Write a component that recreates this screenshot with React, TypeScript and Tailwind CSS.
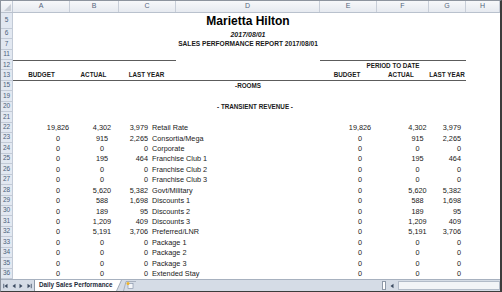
import React from 'react';

const rows: string[][] = [
  ['22', '19,826', '4,302', '3,979', 'Retail Rate', '19,826', '4,302', '3,979'],
  ['23', '0', '915', '2,265', 'Consortia/Mega', '0', '915', '2,265'],
  ['24', '0', '0', '0', 'Corporate', '0', '0', '0'],
  ['25', '0', '195', '464', 'Franchise Club 1', '0', '195', '464'],
  ['26', '0', '0', '0', 'Franchise Club 2', '0', '0', '0'],
  ['27', '0', '0', '0', 'Franchise Club 3', '0', '0', '0'],
  ['28', '0', '5,620', '5,382', 'Govt/Military', '0', '5,620', '5,382'],
  ['29', '0', '588', '1,698', 'Discounts 1', '0', '588', '1,698'],
  ['30', '0', '189', '95', 'Discounts 2', '0', '189', '95'],
  ['31', '0', '1,209', '409', 'Discounts 3', '0', '1,209', '409'],
  ['32', '0', '5,191', '3,706', 'Preferred/LNR', '0', '5,191', '3,706'],
  ['33', '0', '0', '0', 'Package 1', '0', '0', '0'],
  ['34', '0', '0', '0', 'Package 2', '0', '0', '0'],
  ['35', '0', '0', '0', 'Package 3', '0', '0', '0'],
  ['36', '0', '0', '0', 'Extended Stay', '0', '0', '0'],
];

const colHeads = [
  ['A', 'w-[57px]'],
  ['B', 'w-[49px]'],
  ['C', 'w-[57px]'],
  ['D', 'w-[144px]'],
  ['E', 'w-[57px]'],
  ['F', 'w-[52px]'],
  ['G', 'w-[37px]'],
  ['H', 'w-[34px]'],
];

const Row: React.FC<{ n: string; tall?: boolean; children?: React.ReactNode }> = ({ n, tall, children }) => (
  <div className={tall ? 'flex h-[15.8px]' : 'flex h-[10.43px]'}>
    <div className="w-[12px] shrink-0 bg-[#e2e8f1] border-r border-b border-[#c2cad6] flex items-center justify-center text-[6.5px] leading-none text-[#4b5f7b]">
      {n}
    </div>
    <div className="w-[487px] flex items-center whitespace-nowrap leading-none">{children}</div>
  </div>
);

const Arrow: React.FC<{ dir: 'l' | 'r'; bar?: boolean }> = ({ dir, bar }) => (
  <svg width="6" height="6" viewBox="0 0 6 6">
    {dir === 'l' ? <path d="M4.5 0.8 L1.5 3 L4.5 5.2 Z" fill="#3b4a60" /> : <path d="M1.5 0.8 L4.5 3 L1.5 5.2 Z" fill="#3b4a60" />}
    {bar && (dir === 'l' ? <rect x="0.4" y="0.8" width="0.8" height="4.4" fill="#3b4a60" /> : <rect x="4.8" y="0.8" width="0.8" height="4.4" fill="#3b4a60" />)}
  </svg>
);

export default function App() {
  return (
    <div className="w-[502px] h-[292px] overflow-hidden bg-white border-l border-t border-[#8d949e] border-r-2 border-r-[#3c3c3c] border-b border-b-[#3c3c3c] flex flex-col font-['Liberation_Sans_Narrow','Liberation_Sans',Arial,sans-serif] text-[#1a1a1a]">
      {/* column letters */}
      <div className="flex h-[12px] shrink-0 bg-gradient-to-b from-[#f7f8fa] to-[#e6eaf0] border-b border-[#b9c1cd]">
        <div className="w-[12px] border-r border-[#c2cad6] relative">
          <svg className="absolute right-[1px] bottom-[1px]" width="7" height="7" viewBox="0 0 7 7">
            <path d="M7 0 L7 7 L0 7 Z" fill="#c9ced6" />
          </svg>
        </div>
        {colHeads.map(([c, w]) => (
          <div key={c} className={`${w} border-r border-[#c8ced8] flex items-center justify-center text-[7px] text-[#55657c] font-['Liberation_Sans',sans-serif]`}>
            {c}
          </div>
        ))}
      </div>

      <div className="flex-1 overflow-hidden">
        <Row n="5" tall>
          <div className="ml-[163px] w-[144px] text-center font-['Liberation_Sans',Arial,sans-serif] font-bold text-[12px] text-black">Marietta Hilton</div>
        </Row>
        <Row n="6">
          <div className="ml-[163px] w-[144px] text-center font-bold italic text-[7px]">2017/08/01</div>
        </Row>
        <Row n="7">
          <div className="ml-[120px] w-[230px] text-center font-bold text-[6.6px]">SALES PERFORMANCE REPORT 2017/08/01</div>
        </Row>
        <Row n="11" />
        <Row n="12">
          <div className="w-[163px] h-full border-t border-[#5c5c5c]" />
          <div className="w-[144px]" />
          <div className="w-[146px] h-full border-t border-[#5c5c5c] flex items-center justify-center font-bold text-[6.3px]">PERIOD TO DATE</div>
        </Row>
        <Row n="13">
          <div className="w-[453px] h-full flex items-center border-b border-[#5c5c5c] font-bold text-[6.3px]">
            <div className="w-[57px] text-center">BUDGET</div>
            <div className="w-[47px] text-center">ACTUAL</div>
            <div className="w-[59px] text-center">LAST YEAR</div>
            <div className="w-[144px]" />
            <div className="w-[54px] text-center">BUDGET</div>
            <div className="w-[54px] text-center">ACTUAL</div>
            <div className="w-[38px] text-center">LAST YEAR</div>
          </div>
        </Row>
        <Row n="15">
          <div className="ml-[163px] w-[144px] text-center font-bold text-[6.3px]">-ROOMS</div>
        </Row>
        <Row n="19" />
        <Row n="20">
          <div className="ml-[170px] w-[144px] text-center font-bold text-[6.3px]">- TRANSIENT REVENUE -</div>
        </Row>
        <Row n="21" />
        {rows.map((r) => (
          <Row key={r[0]} n={r[0]}>
            <div className="text-[7.3px] flex items-center">
              <div className="ml-[33px] w-[24px] text-center">{r[1]}</div>
              <div className="ml-[10px] w-[44px] text-center">{r[2]}</div>
              <div className="w-[24px] text-right">{r[3]}</div>
              <div className="ml-[4px] w-[188px]">{r[4]}</div>
              <div className="w-[40px] text-center">{r[5]}</div>
              <div className="ml-[18px] w-[39px] text-center">{r[6]}</div>
              <div className="w-[24px] text-right">{r[7]}</div>
            </div>
          </Row>
        ))}
      </div>

      {/* sheet tabs + scrollbar */}
      <div className="h-[12px] shrink-0 flex items-stretch bg-[#d5dce6] border-t border-[#a7b1bf]">
        <div className="w-[33px] flex items-center justify-around px-[1px]">
          <Arrow dir="l" bar />
          <Arrow dir="l" />
          <Arrow dir="r" />
          <Arrow dir="r" bar />
        </div>
        <div className="flex items-center bg-white border-l border-[#8e99a8] pl-[4px] pr-[2px] font-bold text-[6.3px] text-[#1d2a3a] leading-none">
          Daily Sales Performance
        </div>
        <svg width="7" height="11" viewBox="0 0 7 11" className="shrink-0">
          <path d="M0 0 L0 11 L1.5 11 L6.5 0 Z" fill="#ffffff" />
          <path d="M1.5 11 L6.5 0" stroke="#8e99a8" strokeWidth="0.8" />
        </svg>
        <div className="flex items-center ml-[1px]">
          <svg width="14" height="11" viewBox="0 0 14 11">
            <path d="M0.5 11 L3 1.5 L13 1.5" fill="none" stroke="#9aa5b4" strokeWidth="0.8" />
            <rect x="5" y="3.5" width="5" height="5" fill="#f4f6f9" stroke="#7d8aa0" strokeWidth="0.6" />
            <circle cx="5" cy="3.5" r="1.5" fill="#f0b429" />
          </svg>
        </div>
        <div className="flex-1" />
        <div className="w-[4px] my-[1px] bg-white border border-[#8e99a8]" />
        <div className="w-[12px] flex items-center justify-center">
          <Arrow dir="l" />
        </div>
        <div className="w-[102px] my-[1px] bg-[#f2f4f7] border border-[#b2bbc8]" />
      </div>
    </div>
  );
}
